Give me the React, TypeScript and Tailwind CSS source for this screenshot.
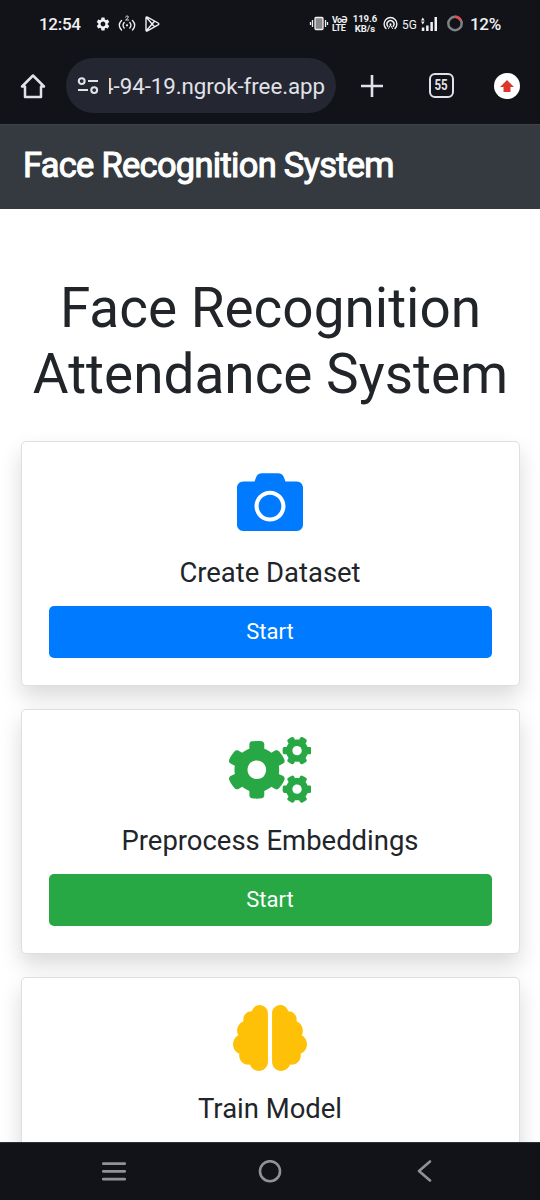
import type { ReactNode } from 'react';
import { FaBrain, FaCamera, FaCogs } from 'react-icons/fa';
import { MdSettings } from 'react-icons/md';

function StatusBar() {
  return (
    <div className="flex h-12 shrink-0 items-center whitespace-nowrap pl-[39px] font-medium text-[#f1f1f4]">
      <span className="w-[56px] pt-px text-[17px] tracking-[-0.3px]">12:54</span>
      <MdSettings className="size-4 shrink-0" />
      <svg className="ml-[7px] h-[18px] w-[20px] shrink-0" viewBox="0 0 20 18" fill="none" stroke="currentColor" strokeWidth="1.3" strokeLinecap="round">
        <path d="M3.5 5.5Q-.9 10.2 3.5 15M6.2 7.5Q3.9 10.4 6.2 13M14.5 5.5Q18.9 10.2 14.5 15M11.8 7.5Q14.1 10.4 11.8 13" />
        <path d="M7.5 2Q9-.2 10.3 1.5 10.8 2.7 7.6 5H10.7" strokeWidth=".9" />
        <circle cx="9" cy="10.3" r="1.1" fill="currentColor" stroke="none" />
      </svg>
      <svg className="ml-[7px] h-4 w-4 shrink-0" viewBox="0 0 16 16" fill="none" stroke="currentColor" strokeWidth="1.4" strokeLinejoin="round">
        <path d="M1 2.1Q1 .6 2.4 1.1L13.1 7Q14.6 8 13.1 8.9L2.4 14.8Q1 15.3 1 13.9ZM1.5 1.5 9.5 10.8M1.5 14.5 9.5 5.2" />
      </svg>
      <div className="ml-[148px] flex items-center">
        <svg className="h-4 w-[20px] shrink-0" viewBox="0 0 20 16" fill="none" stroke="currentColor" strokeWidth="1.3">
          <rect x="6" y="1.5" width="8" height="12" rx="1" fill="#88898d" />
          <path d="M3.5 4V11M1.5 6V9M16.5 4V11M18.5 6V9" />
        </svg>
        <div className="ml-[3px] flex w-[15px] flex-col text-[9px] font-bold leading-[8px]">
          <span className="tracking-[-0.8px]">VoƏ</span>
          <span className="tracking-[-0.3px]">LTE</span>
        </div>
        <div className="ml-[5px] flex w-[26px] flex-col items-center text-[9.5px] font-bold leading-[10px]">
          <span>119.6</span>
          <span>KB/s</span>
        </div>
        <svg className="ml-[5px] h-4 w-[15px] shrink-0" viewBox="0 0 15 16" fill="none" stroke="currentColor" strokeWidth="1.4" strokeLinecap="round">
          <path d="M3 12.5A6.4 6.4 0 1 1 12 12.5M4.8 10.4A3.5 3.5 0 1 1 10.2 10.4" />
          <circle cx="7.5" cy="8.2" r="1" fill="currentColor" stroke="none" /><path d="M7.5 9 5.5 12.5M7.5 9 9.5 12.5" strokeWidth="1" />
        </svg>
        <span className="ml-[4px] w-[15px] origin-left scale-x-[0.88] text-[13.5px] font-normal">5G</span>
        <svg className="ml-[4px] h-4 w-[17px] shrink-0" viewBox="0 0 17 16" fill="currentColor">
          <path d="M1.8 1.5 3.6 4.5H0ZM0 5.5H3.6L1.8 8.5ZM.8 11.5H3.3V15H.8ZM5.1 9.5H7.6V15H5.1ZM9.4 6H11.9V15H9.4ZM13.5 1H16V15H13.5Z" />
        </svg>
        <svg className="ml-[8px] h-[18px] w-[18px] shrink-0" viewBox="0 0 18 18" fill="none" strokeWidth="2.5">
          <circle cx="9" cy="8.5" r="6.7" stroke="#808185" />
          <path d="M9 1.8A6.7 6.7 0 0 1 14.8 5.1" stroke="#e64b51" />
        </svg>
        <span className="ml-[6px] pt-px text-[17px] tracking-[-0.3px]">12%</span>
      </div>
    </div>
  );
}

function BrowserBar() {
  return (
    <div className="flex h-[76px] shrink-0 items-start pt-[10px] text-[#e1e2e9]">
      <div className="flex h-[55px] items-center">
        <svg className="ml-5 h-[26px] w-[26px]" viewBox="0 0 26 26" fill="none" stroke="currentColor" strokeWidth="2.5" strokeLinejoin="round">
          <path d="M2 13.5 13 2.5 24 13.5H21V24H5V13.5Z" />
        </svg>
      </div>
      <div className="ml-5 flex h-[55px] w-[270px] shrink-0 items-center rounded-full bg-[#242731]">
        <svg className="ml-[11px] h-[18px] w-[22px] shrink-0" viewBox="0 0 22 18" fill="none" stroke="currentColor" strokeWidth="2.1">
          <circle cx="4.7" cy="4.1" r="2.9" />
          <circle cx="17.2" cy="13.1" r="2.9" />
          <path d="M11 4H21M1 13H11" />
        </svg>
        <div className="ml-[10px] flex w-[216px] justify-end overflow-hidden whitespace-nowrap text-[22.3px] leading-[30px]">
          <span className="tracking-[-0.05px]">4-94-19.ngrok-free.app</span>
        </div>
      </div>
      <div className="flex h-[55px] items-center">
        <svg className="ml-[25px] h-[22px] w-[22px]" viewBox="0 0 22 22" stroke="currentColor" strokeWidth="2.6">
          <path d="M0 11H22M11 0V22" />
        </svg>
        <div className="ml-[46px] flex size-[25px] items-center justify-center rounded-[6px] border-[2.5px] border-current text-[14px] font-bold"><span className="scale-x-[0.82]">55</span></div>
        <div className="ml-[40px] flex size-[26px] items-center justify-center rounded-full bg-white">
          <svg className="size-[14px]" viewBox="0 0 14 14" fill="#db372d"><path d="M7 1 14 8H10.5V13H3.5V8H0Z" /></svg>
        </div>
      </div>
    </div>
  );
}

function ActionCard({ icon, title, button }: { icon: ReactNode; title: string; button?: string }) {
  return (
    <section className="flex h-[245px] shrink-0 flex-col items-center rounded-[5px] border border-[#dfdfdf] bg-white px-[27px] pt-[27px] shadow-[0_11px_22px_rgba(0,0,0,0.15)]">
      <div className="flex h-[66px] items-center text-[66px]">{icon}</div>
      <h2 className="mt-[22px] text-[27.45px] leading-[33px]">{title}</h2>
      {button && <button className={`mt-[16.5px] h-[51.5px] w-full shrink-0 rounded-[5px] text-[22px] text-white ${button}`}>Start</button>}
    </section>
  );
}

function SystemNavigation() {
  return (
    <nav className="flex h-[58px] shrink-0 items-center border-t border-[#303136] bg-[#121318] pl-[102px] text-[#929296]">
      <svg className="h-6 w-6" viewBox="0 0 24 24" stroke="currentColor" strokeWidth="2.8" strokeLinecap="round">
        <path d="M1.3 3.6H22.7M1.3 11.4H22.7M1.3 19.2H22.7" />
      </svg>
      <svg className="ml-[132px] h-6 w-6" viewBox="0 0 24 24" fill="none" stroke="currentColor" strokeWidth="2.6"><circle cx="12" cy="11.2" r="10" /></svg>
      <svg className="ml-[134px] h-6 w-4" viewBox="0 0 16 24" fill="none" stroke="currentColor" strokeWidth="2.6" strokeLinecap="round" strokeLinejoin="round"><path d="M14 1.5 3 11 14 20.5" /></svg>
    </nav>
  );
}

export default function App() {
  return (
    <div className="flex h-[1200px] w-[540px] flex-col overflow-hidden bg-white font-['Roboto',sans-serif] text-[#212529]">
      <div className="shrink-0 bg-[#121318]">
        <StatusBar />
        <BrowserBar />
      </div>
      <header className="flex h-[85px] shrink-0 items-center border-t border-[#414349] bg-[#343a40] pb-[5px] pl-[23px] text-white">
        <span className="whitespace-nowrap text-[34.4px] leading-[52px] tracking-[-0.68px] [-webkit-text-stroke:1.1px_white]">Face Recognition System</span>
      </header>
      <main className="flex min-h-0 flex-1 flex-col overflow-hidden px-[20.5px] pt-[66px]">
        <h1 className="mx-[-10px] shrink-0 whitespace-nowrap pl-px text-center text-[54.9px] leading-[66px]">Face Recognition<br />Attendance System</h1>
        <div className="mt-[33.5px] flex shrink-0 flex-col gap-[23px]">
          <ActionCard title="Create Dataset" button="bg-[#007bff]" icon={<FaCamera className="text-[#007bff]" />} />
          <ActionCard title="Preprocess Embeddings" button="bg-[#28a745]" icon={<FaCogs className="h-[66px] w-[82.5px] text-[#28a745]" />} />
          <ActionCard title="Train Model" icon={<FaBrain className="h-[66px] w-[74px] text-[#ffc107]" />} />
        </div>
      </main>
      <SystemNavigation />
    </div>
  );
}
